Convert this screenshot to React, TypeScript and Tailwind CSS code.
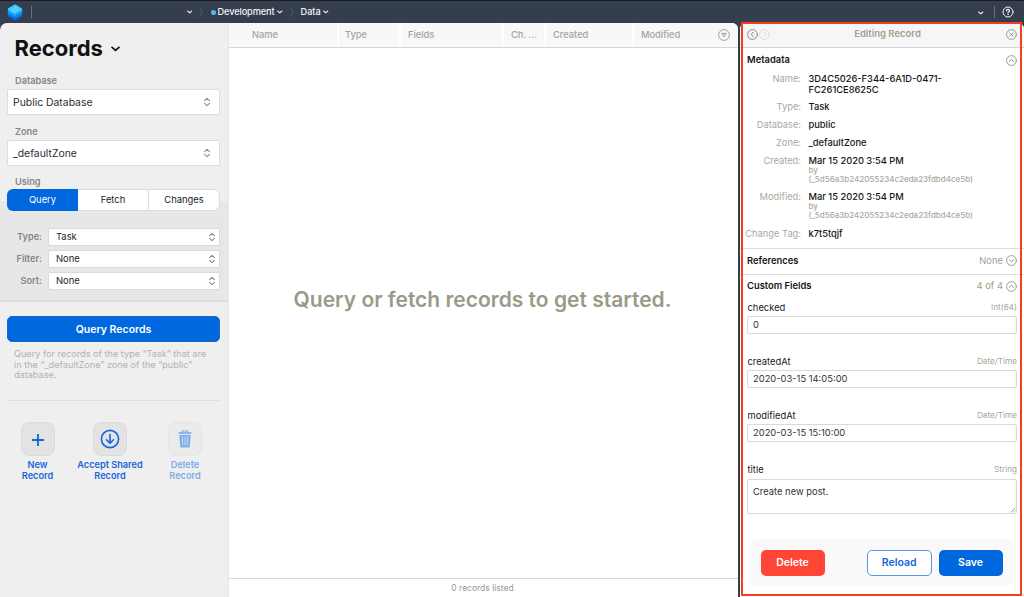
import type { ReactNode } from "react";

function Chevron({ className }: { className: string }) {
  return (
    <svg viewBox="0 0 10 6" className={className} fill="none" stroke="currentColor" strokeWidth="2" strokeLinecap="round" strokeLinejoin="round">
      <path d="M1.2 1.2 5 4.6 8.8 1.2" />
    </svg>
  );
}

function UpDown() {
  return (
    <svg viewBox="0 0 8 10" className="h-[10px] w-[8px] shrink-0 text-[#8c8c8c]" fill="none" stroke="currentColor" strokeWidth="1.1" strokeLinecap="round" strokeLinejoin="round">
      <path d="M1.5 3.6 4 1.4 6.5 3.6M1.5 6.4 4 8.6 6.5 6.4" />
    </svg>
  );
}

function CircleIcon({ d, className = "text-[#929285]" }: { d: string; className?: string }) {
  return (
    <svg viewBox="0 0 11 11" className={`size-[11px] shrink-0 ${className}`} fill="none" stroke="currentColor" strokeWidth="1" strokeLinecap="round" strokeLinejoin="round">
      <circle cx="5.5" cy="5.5" r="4.9" strokeWidth="0.9" />
      <path d={d} />
    </svg>
  );
}

const UP = "M3.3 6.4 5.5 4.4 7.7 6.4";
const DOWN = "M3.3 4.7 5.5 6.7 7.7 4.7";

function Crumb() {
  return (
    <svg viewBox="0 0 4 10" className="h-[9px] w-[4px]" fill="none" stroke="#5d6673" strokeWidth="0.9">
      <path d="M.5.5 3.4 5 .5 9.5" />
    </svg>
  );
}

function TopBar() {
  return (
    <header className="flex h-[23px] shrink-0 items-center border-t border-[#1d1c1e] bg-[#343e4f] text-[9.2px] font-medium text-[#f2f3f5]">
      <svg viewBox="0 0 16 18" className="ml-[6.5px] h-[17px] w-[16px]">
        <path d="M8 .5 14.6 4.2Q15.6 4.8 15.6 6v6q0 1.2-1 1.8L8 17.5 1.4 13.8Q.4 13.2.4 12V6q0-1.2 1-1.8Z" fill="#0a62d8" />
        <path d="M8 .5 14.6 4.2Q15.6 4.8 15.6 6v5L8 15.2.4 11V6q0-1.2 1-1.8Z" fill="#0f86f0" />
        <path d="M8 .5 14.6 4.2Q15.6 4.8 15.6 6v2.6L8 12.8.4 8.6V6q0-1.2 1-1.8Z" fill="#17a4fa" />
        <path d="M8 .5 14.6 4.2Q15.6 4.8 15.4 6.400L8 10.600.6 6.400Q.4 4.800 1.400 4.200Z" fill="#3cc6fb" />
        <path d="M4.700 7.800Q4 5.200 6.400 5.100 7.700 2.800 10 3.900 12.200 4.900 10.700 6.800L8 8.500Q5.800 9.600 4.700 7.800L9.800 4.700" fill="none" stroke="#8ee6ff" strokeWidth=".6" />
      </svg>
      <span className="ml-[8px] h-[12px] w-px bg-[#68717f]" />
      <Chevron className="ml-[155px] h-[4px] w-[5.5px]" />
      <span className="ml-[7px] flex"><Crumb /></span>
      <span className="ml-[7.500px] size-[5px] rounded-full bg-[#55b9f8]" />
      <span className="ml-[2px] w-[57px] whitespace-nowrap tracking-[-0.1px]">Development</span>
      <Chevron className="ml-[2.500px] h-[4px] w-[5.500px]" />
      <span className="ml-[7px] flex"><Crumb /></span>
      <span className="ml-[7px] w-[20.500px]">Data</span>
      <Chevron className="ml-[2px] h-[4px] w-[5.500px]" />
      <span className="flex-1" />
      <Chevron className="mt-[1px] h-[4px] w-[5.500px]" />
      <span className="ml-[10.500px] h-[12px] w-px bg-[#68717f]" />
      <svg viewBox="0 0 12 12" className="mr-[10px] ml-[7px] size-[12px]" fill="none" stroke="#f4f5f6" strokeLinecap="round">
        <circle cx="6" cy="6" r="5" strokeWidth="1" />
        <path d="M4.500 4.800Q4.500 3.400 6 3.400T7.500 4.700Q7.500 5.400 6.700 5.800 6 6.200 6 6.900" strokeWidth="1.200" />
        <circle cx="6" cy="8.600" r=".3" strokeWidth=".6" />
      </svg>
    </header>
  );
}

function BigSelect({ label, value }: { label: string; value: string }) {
  return (
    <div>
      <div className="flex h-[17px] items-center pl-[8px] text-[9.2px] font-semibold text-[#858585]">{label}</div>
      <div className="flex h-[26px] items-center justify-between rounded-[2px] border border-[#dcdcdc] bg-white pr-[8px] pl-[5px] text-[10.4px] text-[#2c2c2c]">
        <span className="pt-[1px]">{value}</span>
        <UpDown />
      </div>
    </div>
  );
}

function SmallSelect({ label, value }: { label: string; value: string }) {
  return (
    <div className="flex items-center">
      <span className="w-[41px] pr-[6px] text-right text-[9.2px] font-semibold text-[#858585]">{label}</span>
      <div className="flex h-[18px] flex-1 items-center justify-between rounded-[2px] border border-[#dadada] bg-white pr-[3px] pl-[7px] text-[9.4px] text-[#262626]">
        <span className="pt-[1px]">{value}</span>
        <UpDown />
      </div>
    </div>
  );
}

function Action({ children, label, width, faded }: { children: ReactNode; label: [string, string]; width: string; faded?: boolean }) {
  return (
    <div className={`flex flex-col items-center ${width} ${faded ? "text-[#7badea]" : "text-[#1766dc]"}`}>
      <div className={`flex size-[34px] items-center justify-center rounded-[8px] border ${faded ? "border-[#e5e5e5] bg-[#eaeaea]" : "border-[#dadada] bg-[#e3e3e3]"}`}>{children}</div>
      <div className="mt-[3px] text-center text-[9.2px] leading-[11px] font-semibold whitespace-nowrap">
        {label[0]}
        <br />
        {label[1]}
      </div>
    </div>
  );
}

function Sidebar() {
  return (
    <aside className="flex w-[228px] shrink-0 flex-col rounded-tl-[7px] bg-[#efefef]">
      <div className="h-[178px] pr-[8px] pl-[7px]">
        <div className="flex h-[49px] items-center pt-[1px] pl-[7.500px] text-[22px] font-bold text-[#111]">
          <span className="w-[88px]">Records</span>
          <Chevron className="mt-[2px] ml-[8px] h-[6px] w-[9px]" />
        </div>
        <BigSelect label="Database" value="Public Database" />
        <div className="mt-[8px]">
          <BigSelect label="Zone" value="_defaultZone" />
        </div>
        <div className="mt-[7px] flex h-[17px] items-center pl-[8px] text-[9.200px] font-semibold text-[#858585]">Using</div>
      </div>
      <div className="h-[101px] border-y border-b-2 border-[#dedede] border-t-[#e9e9e9] bg-[#e7e7e7] pr-[8px] pl-[7px]">
        <div className="-mt-[13px] flex h-[22px] rounded-[6px] border border-[#dcdcdc] bg-white text-[9.400px] text-[#222]">
          <span className="-m-px flex w-[71px] items-center justify-center rounded-l-[6px] bg-[#0068df] text-white">Query</span>
          <span className="ml-px flex w-[71px] items-center justify-center border-r border-[#dcdcdc]">Fetch</span>
          <span className="flex flex-1 items-center justify-center">Changes</span>
        </div>
        <div className="mt-[17px] flex flex-col gap-[4px]">
          <SmallSelect label="Type:" value="Task" />
          <SmallSelect label="Filter:" value="None" />
          <SmallSelect label="Sort:" value="None" />
        </div>
      </div>
      <div className="pt-[14px] pr-[8px] pl-[7px]">
        <button className="block h-[26px] w-full rounded-[5px] border border-[#1d66c6] bg-[#0068df] pt-[1px] text-[10.500px] font-semibold text-white">Query Records</button>
        <p className="mt-[7px] pl-[7px] text-[9.150px] leading-[10.700px] whitespace-nowrap text-[#b2b2b2]">
          Query for records of the type “Task” that are
          <br />
          in the “_defaultZone” zone of the “public”
          <br />
          database.
        </p>
        <hr className="mt-[19px] border-[#dfdfdf]" />
        <div className="mt-[21px] flex">
          <Action label={["New", "Record"]} width="w-[61px]">
            <svg viewBox="0 0 12 12" className="mt-[1px] size-[12px]" stroke="currentColor" strokeWidth="1.900"><path d="M6 0v12M0 6h12" /></svg>
          </Action>
          <Action label={["Accept Shared", "Record"]} width="w-[84px]">
            <svg viewBox="0 0 20 20" className="mb-[1px] size-[20px]" fill="none" stroke="currentColor" strokeWidth="1.600" strokeLinecap="round" strokeLinejoin="round">
              <circle cx="10" cy="10" r="8.600" />
              <path d="M10 5.500v8.500M6.500 10.800 10 14.200 13.500 10.800" />
            </svg>
          </Action>
          <Action label={["Delete", "Record"]} width="w-[66px]" faded>
            <svg viewBox="0 0 14 18" className="h-[18px] w-[14px]" fill="none" stroke="currentColor">
              <path d="M4.500 2.500V1h5v1.500" strokeWidth="1.200" />
              <path d="M.7 3h12.600" strokeWidth="1.700" />
              <path d="M1.300 5h11.400L11.600 17.500H2.400Z" fill="currentColor" stroke="none" />
              <path d="M4.300 6.300 4.800 15.500M7 6.300v9.200M9.700 6.300 9.200 15.500" stroke="#e9e9e9" strokeWidth=".8" />
            </svg>
          </Action>
        </div>
      </div>
    </aside>
  );
}

function Column({ name, className }: { name: string; className: string }) {
  return <div className={`flex shrink-0 items-center border-r-2 border-white ${className}`}>{name}</div>;
}

function Results() {
  return (
    <main className="flex w-[509.500px] shrink-0 flex-col rounded-tr-[6px] border-l border-[#e5e5e5] bg-white">
      <div className="flex h-[25px] shrink-0 rounded-tr-[6px] border-b border-[#d8d8d8] bg-[#f8f8f8] text-[9.300px] font-medium text-[#a2a2a2]">
        <Column name="Name" className="w-[110px] pl-[23px]" />
        <Column name="Type" className="w-[62px] pl-[6px]" />
        <Column name="Fields" className="w-[103px] pl-[7px]" />
        <Column name="Ch. ..." className="w-[42px] pl-[7px]" />
        <Column name="Created" className="w-[88px] pl-[7px]" />
        <div className="flex flex-1 items-center justify-between pr-[7.500px] pl-[7px]">
          Modified
          <svg viewBox="0 0 12 12" className="size-[12px]" fill="none" stroke="#9a9a9a" strokeWidth=".9">
            <circle cx="6" cy="6" r="5.400" />
            <path d="M3.100 4.400h5.800M3.900 5.900h4.200M4.900 7.400h2.200" />
          </svg>
        </div>
      </div>
      <div className="flex flex-1 items-center justify-center pr-[1.500px] pb-[27px] text-[21px] font-semibold text-[#999b89]">
        <span className="whitespace-nowrap">Query or fetch records to get started.</span>
      </div>
      <div className="flex h-[19px] shrink-0 items-center justify-center border-t border-[#d6d6d6] pr-[1.500px] text-[8.500px] text-[#999]">0 records listed</div>
    </main>
  );
}

function Meta({ label, value, by, height }: { label: string; value: ReactNode; by?: boolean; height: string }) {
  return (
    <div className={`flex text-[9.300px] leading-[11px] ${height}`}>
      <span className="w-[59px] shrink-0 text-right whitespace-nowrap text-[#a8aa9d]">{label}</span>
      <div className="ml-[7.500px] font-medium whitespace-nowrap text-[#161616]">
        {value}
        {by && (
          <div className="text-[8px] leading-[9px] text-[#a8aa9e]">
            by
            <br />
            (_5d56a3b242055234c2eda23fdbd4ce5b)
          </div>
        )}
      </div>
    </div>
  );
}

function SectionTitle({ title, note, d, height }: { title: string; note?: string; d: string; height: string }) {
  return (
    <div className={`flex shrink-0 items-center justify-between pr-[5px] pl-[5px] ${height}`}>
      <h2 className="text-[9.400px] font-semibold text-[#161616]">{title}</h2>
      <div className="flex items-center gap-[3px] text-[9.400px] text-[#a0a294]">
        {note}
        <CircleIcon d={d} />
      </div>
    </div>
  );
}

function FieldLabel({ name, type }: { name: string; type: string }) {
  return (
    <div className="flex h-[18px] items-center justify-between pt-[2px]">
      <span className="pl-[1px] text-[9.400px] text-[#202020]">{name}</span>
      <span className="pb-[1px] text-[8.200px] text-[#a6a89a]">{type}</span>
    </div>
  );
}

function Field({ name, type, value }: { name: string; type: string; value: string }) {
  return (
    <div className="h-[54px] shrink-0 pr-[5px] pl-[4.500px]">
      <FieldLabel name={name} type={type} />
      <div className="flex h-[18px] items-center rounded-[2px] border border-[#d9d9d9] bg-white pl-[5.500px] text-[9.400px] text-[#333]">{value}</div>
    </div>
  );
}

function Editor() {
  return (
    <section className="relative ml-[2.500px] flex min-w-0 flex-1 flex-col rounded-t-[6px] bg-white px-[2px]">
      <div className="-mx-[2px] flex h-[25px] shrink-0 items-center rounded-t-[6px] border-b border-[#d6d6d6] bg-[#f6f6f6] pr-[7.500px] pb-[1px] pl-[6.500px]">
        <CircleIcon d="M6.200 3.300 4.300 5.500 6.200 7.700" className="text-[#7e7e78]" />
        <span className="ml-[1px] flex"><CircleIcon d="M4.800 3.300 6.700 5.500 4.800 7.700" className="text-[#d8d8d6]" /></span>
        <span className="flex-1 pl-[12px] text-center text-[9.500px] font-semibold text-[#a0a293]">Editing Record</span>
        <span className="w-[12px]" />
        <CircleIcon d="M3.900 3.900 7.100 7.100M7.100 3.900 3.900 7.100" className="text-[#8e8e88]" />
      </div>
      <SectionTitle title="Metadata" d={UP} height="h-[25px]" />
      <div className="-mx-[2px] flex h-[175.500px] shrink-0 flex-col border-b border-[#dcdcdc] px-[2px]">
        <Meta label="Name:" value={<>3D4C5026-F344-6A1D-0471-<br />FC261CE8625C</>} height="h-[28px]" />
        <Meta label="Type:" value="Task" height="h-[18px]" />
        <Meta label="Database:" value="public" height="h-[18px]" />
        <Meta label="Zone:" value="_defaultZone" height="h-[18px]" />
        <Meta label="Created:" value="Mar 15 2020 3:54 PM" by height="h-[36px]" />
        <Meta label="Modified:" value="Mar 15 2020 3:54 PM" by height="h-[36.500px]" />
        <Meta label="Change Tag:" value="k7t5tqjf" height="h-[18px]" />
      </div>
      <SectionTitle title="References" note="None" d={DOWN} height="h-[26px] -mx-[2px] px-[7px]! border-b border-[#dcdcdc]" />
      <SectionTitle title="Custom Fields" note="4 of 4" d={UP} height="h-[23.500px]" />
      <Field name="checked" type="Int(64)" value="0" />
      <Field name="createdAt" type="Date/Time" value="2020-03-15 14:05:00" />
      <Field name="modifiedAt" type="Date/Time" value="2020-03-15 15:10:00" />
      <div className="pr-[5px] pl-[4.500px]">
        <FieldLabel name="title" type="String" />
        <div className="mt-[1px] flex h-[35px] items-end justify-between rounded-[2px] border border-[#d9d9d9] pl-[5.500px] text-[9.400px] text-[#333]">
          <span className="self-start pt-[5px] leading-[14px]">Create new post.</span>
          <svg viewBox="0 0 6 6" className="size-[6px]" stroke="#777" strokeWidth=".7"><path d="M.7 5.400 5.400.7M3.300 5.400 5.400 3.300" /></svg>
        </div>
      </div>
      <div className="mr-[8.500px] ml-[8px] mt-[25px] flex h-[47px] shrink-0 items-center rounded-[6px] bg-[#f9f9f9] pr-[11px] pl-[10.500px] text-[10.500px] font-semibold">
        <button className="h-[26px] w-[64px] rounded-[5px] bg-[#ff4536] pt-[1px] text-white">Delete</button>
        <span className="flex-1" />
        <button className="h-[26px] w-[64.500px] rounded-[5px] border border-[#5a93e6] bg-white pt-[1px] text-[#1766dc]">Reload</button>
        <button className="ml-[7px] h-[26px] w-[64px] rounded-[5px] bg-[#0068df] pt-[1px] text-white">Save</button>
      </div>
      <div className="pointer-events-none absolute top-[-1px] right-[2px] bottom-[1px] left-[1px] border-2 border-[#fb3b20]" />
    </section>
  );
}

export default function App() {
  return (
    <div className="flex h-[597px] w-[1024px] flex-col overflow-hidden bg-[#343e4f] font-['Inter','Liberation_Sans',sans-serif]">
      <TopBar />
      <div className="flex min-h-0 flex-1">
        <Sidebar />
        <Results />
        <Editor />
      </div>
    </div>
  );
}
